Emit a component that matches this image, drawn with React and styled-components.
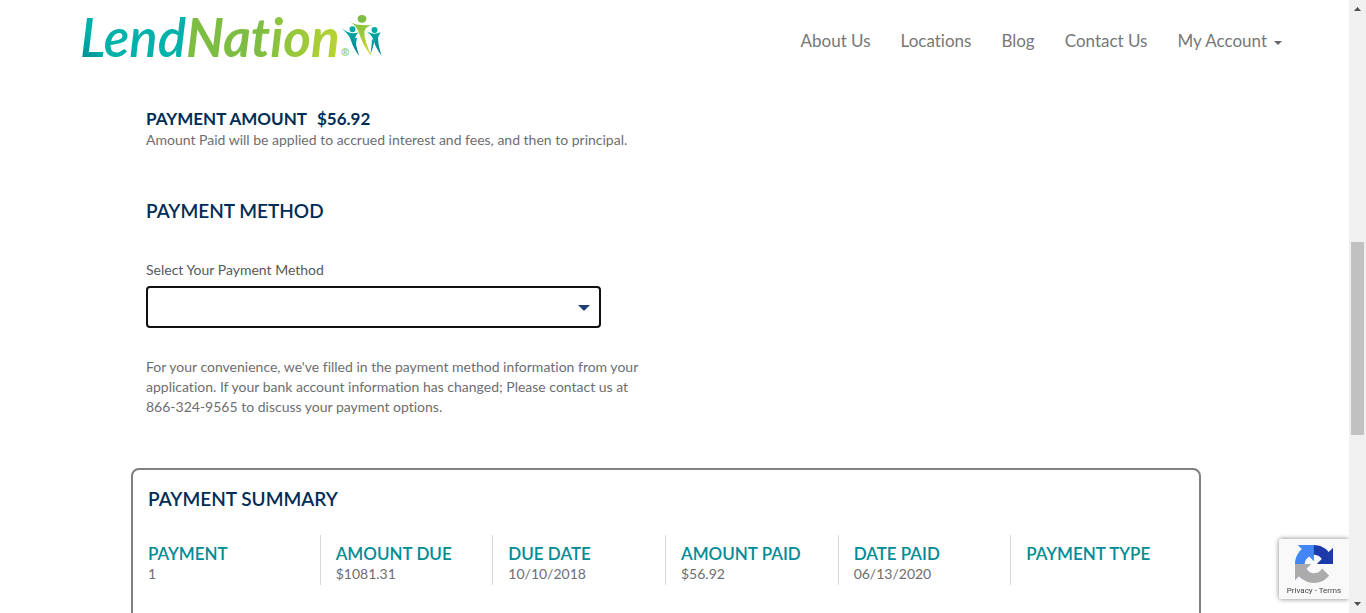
import React from "react";
import styled, { createGlobalStyle } from "styled-components";

const GlobalStyle = createGlobalStyle`
  * { box-sizing: border-box; }
  body {
    margin: 0;
    background: #fff;
    color: #6d6e71;
    font-family: Lato, "Liberation Sans", sans-serif;
    font-size: 14px;
    font-variant-ligatures: none;
    line-height: 20px;
  }
`;

const Page = styled.div`
  height: 100vh;
  overflow: hidden;
  padding-right: 17px;
`;

const Header = styled.header`
  display: flex;
  justify-content: space-between;
  align-items: center;
  height: 82px;
  padding: 0 67px 0 81px;
`;

const LogoLink = styled.a`
  display: block;
  height: 54px;
  svg { display: block; overflow: visible; }
`;

const Nav = styled.nav`
  display: flex;
  gap: 30px;
`;

const NavLink = styled.a`
  display: flex;
  align-items: center;
  gap: 7px;
  color: #777;
  font-size: 17px;
  line-height: 24px;
  text-decoration: none;
`;

const Caret = styled.span`
  border-top: 4px solid #666;
  border-left: 4px solid transparent;
  border-right: 4px solid transparent;
  margin-top: 3px;
`;

const Main = styled.main`
  padding: 26px 148px 0 131px;
`;

const Section = styled.section`
  max-width: 540px;
  padding: 0 15px;
  margin-bottom: ${(p) => p.$gap}px;
`;

const Heading = styled.h2`
  margin: 0;
  color: #002d56;
  font-size: ${(p) => (p.$small ? 17 : 19)}px;
  font-weight: ${(p) => (p.$small ? 700 : 600)};
  line-height: 22px;
  text-transform: uppercase;
`;

const Amount = styled.span`
  margin-left: 10px;
`;

const Text = styled.p`
  margin: 0;
`;

const Label = styled.label`
  display: block;
  margin-top: 38px;
  margin-bottom: 6px;
  color: #58595b;
`;

const SelectWrap = styled.div`
  position: relative;
  max-width: 455px;
  margin-bottom: 29px;
  svg {
    position: absolute;
    right: 11px;
    top: 19px;
    pointer-events: none;
  }
`;

const Select = styled.select`
  display: block;
  width: 100%;
  height: 42px;
  padding: 0 30px 0 12px;
  border: 2px solid #101010;
  border-radius: 4px;
  background: #fff;
  color: #58595b;
  font: inherit;
  appearance: none;
  outline: none;
`;

const Summary = styled.section`
  padding: 18px 15px 120px;
  border: 2px solid #808080;
  border-radius: 8px;
`;

const Table = styled.table`
  width: 100%;
  margin-top: 25px;
  border-spacing: 0;
  table-layout: fixed;
  th, td {
    padding: 0 0 0 15px;
    border-right: 1px solid #d8d8d8;
    text-align: left;
    vertical-align: top;
    white-space: nowrap;
  }
  th:first-child, td:first-child {
    padding-left: 0;
  }
  th:last-child, td:last-child {
    border-right: 0;
  }
  th {
    padding-top: 8px;
    color: #008c95;
    font-size: 17px;
    font-weight: 600;
    line-height: 21px;
    text-transform: uppercase;
  }
  td { height: 21px; }
`;

const Captcha = styled.aside`
  position: fixed;
  right: 17px;
  bottom: 14px;
  display: flex;
  flex-direction: column;
  align-items: center;
  width: 70px;
  height: 60px;
  padding-top: 6px;
  border-radius: 2px 0 0 2px;
  background: #f9f9f9;
  box-shadow: 0 0 5px #808080;
  clip-path: inset(-8px 0 -8px -8px);
`;

const CaptchaLinks = styled.div`
  margin-top: 3px;
  color: #444;
  font: 8px/10px Roboto, sans-serif;
  white-space: nowrap;
  a { color: inherit; text-decoration: none; }
`;

const ScrollTrack = styled.div`
  position: fixed;
  top: 0;
  right: 0;
  bottom: 0;
  display: flex;
  flex-direction: column;
  align-items: center;
  justify-content: space-between;
  width: 17px;
  padding: 7px 0;
  background: #f0f0f0;
`;

const ScrollThumb = styled.div`
  position: absolute;
  top: 242px;
  left: 2px;
  right: 2px;
  height: 193px;
  background: #c1c1c1;
`;

const ScrollArrow = ({ down }) => (
  <svg width="7" height="4" viewBox="0 0 7 4" aria-hidden="true">
    <path d={down ? "M0 0h7L3.5 4z" : "M0 4h7L3.5 0z"} fill="#505050" />
  </svg>
);

const Logo = () => (
  <svg width="302" height="52" viewBox="0 0 302 52" role="img" aria-label="LendNation">
    <defs>
      <linearGradient id="teal" gradientUnits="userSpaceOnUse" x1="0" y1="46" x2="18" y2="30">
        <stop offset="0" stopColor="#008b96" />
        <stop offset="1" stopColor="#00b2a9" />
      </linearGradient>
      <linearGradient id="green" gradientUnits="userSpaceOnUse" x1="107" y1="0" x2="262" y2="0">
        <stop offset="0.45" stopColor="#7dbd42" />
        <stop offset="1" stopColor="#bbd531" />
      </linearGradient>
      <linearGradient id="body" x1="0" y1="0" x2="0" y2="1">
        <stop offset="0" stopColor="#7dbd42" />
        <stop offset="0.45" stopColor="#a0ca38" />
        <stop offset="1" stopColor="#d9e021" />
      </linearGradient>
      <linearGradient id="small" x1="0" y1="0" x2="0" y2="1">
        <stop offset="0" stopColor="#00aaa6" />
        <stop offset="1" stopColor="#00808f" />
      </linearGradient>
    </defs>
    <g fontFamily="Lato, sans-serif" fontStyle="italic" fontSize="53">
      <text x="-1" y="43" fontWeight="600" fill="url(#teal)">Lend</text>
      <text x="105" y="43" fontWeight="700" fill="url(#green)">Nation</text>
    </g>
    <text x="260" y="42" fontFamily="Open Sans, sans-serif" fontSize="10" fontWeight="700" fill="#8cc63f">®</text>
    <ellipse cx="281" cy="4.800" rx="4.3" ry="3.9" fill="#7dbd42" />
    <path d="M265 4.500q6 5.500 11.500 6.200q6 .8 13.500.3q-6.500 2.500-6.700 7q-.2 8 7.200 24q-8.500-10-12.300-22.500q-1.800-6-6-9.500q-4.400-3-7.200-5.500z" fill="url(#body)" />
    <circle cx="271.500" cy="15.300" r="3" fill="#00aaa6" />
    <path d="M260.500 14q4.500 4.300 9 5q4 .5 8-.5q-3.300 2.500-3.300 5.500q0 6 4 18q-6-8-8-15q-1.200-4.200-4-7.300z" fill="url(#small)" />
    <path d="M273 24h3q-1.500 5-.5 13q-2.500-6-2.500-13z" fill="url(#small)" />
    <circle cx="293.500" cy="16" r="3" fill="#00aaa6" />
    <path d="M282.500 15q4.200 4 9 4.600q4 .4 8.300-1.300q-2.600 3.500-2.700 6q0 7 3.500 17.500q-6-8-7.600-14.500q-1.200-4.500-4.500-7.500z" fill="url(#small)" />
    <path d="M291 25l2.500 2q-1.500 7-4 13q1.200-8 1.500-15z" fill="url(#small)" />
  </svg>
);

const CaptchaLogo = () => (
  <svg width="38" height="38" viewBox="0 0 64 64" aria-hidden="true">
    <path d="M64 31.955l-.033-1.37V4.687l-7.16 7.16C50.948 4.674 42.033.093 32.05.093c-10.4 0-19.622 4.96-25.458 12.64l11.736 11.86a15.55 15.55 0 0 1 4.754-5.334c2.05-1.6 4.952-2.906 8.968-2.906.485 0 .86.057 1.135.163 4.976.393 9.288 3.14 11.828 7.124l-8.307 8.307L64 31.953" fill="#1c3aa9" />
    <path d="M31.862.094l-1.37.033H4.594l7.16 7.16C4.58 13.147 0 22.06 0 32.046c0 10.4 4.96 19.622 12.64 25.458L24.5 45.768a15.55 15.55 0 0 1-5.334-4.754c-1.6-2.05-2.906-4.952-2.906-8.968 0-.485.057-.86.163-1.135.393-4.976 3.14-9.288 7.124-11.828l8.307 8.307L31.86.095" fill="#4285f4" />
    <path d="M.001 32.045l.033 1.37v25.898l7.16-7.16c5.86 7.173 14.774 11.754 24.76 11.754 10.4 0 19.622-4.96 25.458-12.64l-11.736-11.86a15.55 15.55 0 0 1-4.754 5.334c-2.05 1.6-4.952 2.906-8.968 2.906-.485 0-.86-.057-1.135-.163-4.976-.393-9.288-3.14-11.828-7.124l8.307-8.307L.004 32.047" fill="#ababab" />
  </svg>
);

const links = ["About Us", "Locations", "Blog", "Contact Us"];

const summary = [
  ["Payment", "1"],
  ["Amount Due", "$1081.31"],
  ["Due Date", "10/10/2018"],
  ["Amount Paid", "$56.92"],
  ["Date Paid", "06/13/2020"],
  ["Payment Type", ""],
];

export default function App() {
  return (
    <Page>
      <GlobalStyle />
      <Header>
        <LogoLink href="#home"><Logo /></LogoLink>
        <Nav>
          {links.map((l) => <NavLink key={l} href="#nav">{l}</NavLink>)}
          <NavLink href="#account">My Account<Caret /></NavLink>
        </Nav>
      </Header>
      <Main>
        <Section $gap={50}>
          <Heading $small>Payment Amount<Amount>$56.92</Amount></Heading>
          <Text>Amount Paid will be applied to accrued interest and fees, and then to principal.</Text>
        </Section>
        <Section $gap={51}>
          <Heading>Payment Method</Heading>
          <Label htmlFor="method">Select Your Payment Method</Label>
          <SelectWrap>
            <Select id="method" defaultValue="">
              <option value=""></option>
            </Select>
            <svg width="12" height="6" viewBox="0 0 12 6" aria-hidden="true">
              <path d="M0 0h12L6 6z" fill="#1c4078" />
            </svg>
          </SelectWrap>
          <Text>
            For your convenience, we've filled in the payment method information from your
            application. If your bank account information has changed; Please contact us at
            866-324-9565 to discuss your payment options.
          </Text>
        </Section>
        <Summary>
          <Heading>Payment Summary</Heading>
          <Table>
            <thead>
              <tr>{summary.map(([h]) => <th key={h} scope="col">{h}</th>)}</tr>
            </thead>
            <tbody>
              <tr>{summary.map(([h, v]) => <td key={h}>{v}</td>)}</tr>
            </tbody>
          </Table>
        </Summary>
      </Main>
      <Captcha>
        <CaptchaLogo />
        <CaptchaLinks><a href="#privacy">Privacy</a> - <a href="#terms">Terms</a></CaptchaLinks>
      </Captcha>
      <ScrollTrack>
        <ScrollArrow />
        <ScrollThumb />
        <ScrollArrow down />
      </ScrollTrack>
    </Page>
  );
}
